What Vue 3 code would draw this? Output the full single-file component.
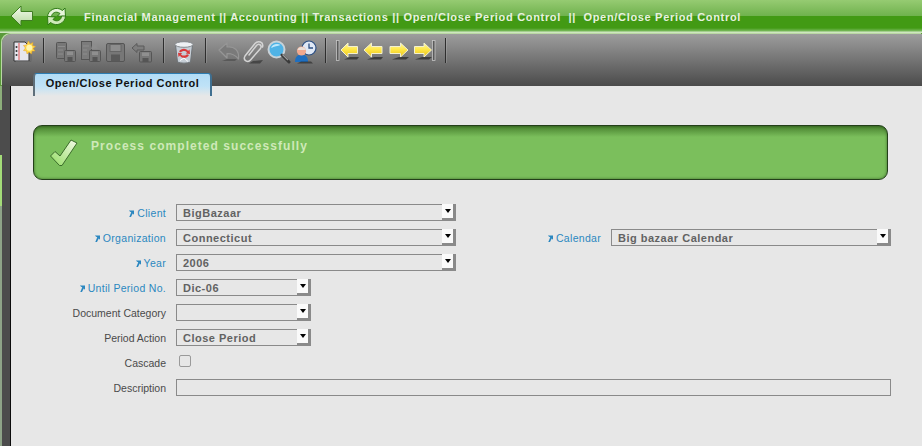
<script setup>
const breadcrumb = 'Financial Management || Accounting || Transactions || Open/Close Period Control  ||  Open/Close Period Control'
</script>

<template>
  <div class="page">
    <header class="topbar">
      <svg class="back" width="24" height="22" viewBox="0 0 24 22">
        <defs>
          <linearGradient id="backFill" x1="0" y1="0" x2="0" y2="1">
            <stop offset="0" stop-color="#f6fbf0" />
            <stop offset="1" stop-color="#b4d89c" />
          </linearGradient>
          <linearGradient id="arrowFill" x1="0" y1="0" x2="0" y2="1">
            <stop offset="0" stop-color="#fff9a0" />
            <stop offset="0.5" stop-color="#ffe642" />
            <stop offset="1" stop-color="#e8c020" />
          </linearGradient>
        </defs>
        <path d="M1 11 L11 1 L11 6.5 L22.5 6.5 L22.5 15.5 L11 15.5 L11 21 Z" fill="url(#backFill)" stroke="#3f7d22" stroke-width="1" stroke-linejoin="round" />
      </svg>
      <svg class="refresh" width="21" height="21" viewBox="0 0 21 21">
        <path d="M1.5 11 C1.5 4 10.5 -0.5 16.5 4.5 L19 2 L19.5 10.5 L11.5 10 L14 7.5 C10 4.5 5.5 7 5.5 11 Z" fill="#e6f5da" stroke="#2f7a15" stroke-width="1" stroke-linejoin="round" />
        <path d="M19.5 10 C19.5 17 10.5 21.5 4.5 16.5 L2 19 L1.5 10.5 L9.5 11 L7 13.5 C11 16.5 15.5 14 15.5 10 Z" fill="#cfeab8" stroke="#2f7a15" stroke-width="1" stroke-linejoin="round" />
      </svg>
      <span class="crumbs">{{ breadcrumb }}</span>
    </header>

    <div class="toolbar-wrap">
      <nav class="toolbar">
        <svg class="tool" width="24" height="24" viewBox="0 0 24 24">
          <path d="M2 2 H13 L17 6 V21 H2 Z" fill="#e6e6ee" stroke="#333" stroke-width="1" />
          <path d="M4 21.5 H19 V12" fill="none" stroke="#666" stroke-width="1" />
          <path d="M7 3 V20" stroke="#e05050" stroke-width="1" />
          <circle cx="4.5" cy="7" r="1" fill="#333" /><circle cx="4.5" cy="11" r="1" fill="#333" /><circle cx="4.5" cy="15" r="1" fill="#333" />
          <path d="M16.5 1 L18 4 L21 2.5 L20.5 5.5 L23.5 6.5 L21 8.5 L23 11 L20 11 L19.5 14 L17 12 L15 14 L14.5 11 L11.5 10.5 L13.5 8 L11.5 5.5 L14.5 5 Z" fill="#ffd84a" stroke="#e8a020" stroke-width="0.5" />
          <circle cx="17.3" cy="7.8" r="3" fill="#fff6b0" />
        </svg>
        <i class="sep first"></i>

        <svg class="tool" width="24" height="24" viewBox="0 0 24 24">
          <g fill="#777" stroke="#555" stroke-width="1">
            <rect x="2.5" y="2.5" width="10" height="16" rx="1" />
            <rect x="10.5" y="10.5" width="11" height="11" rx="1" />
          </g>
          <path d="M4 6.5 H11 M4 10 H9 M4 14 H9" stroke="#8d8d8d" />
          <rect x="13" y="11.5" width="6" height="3.5" fill="#8f8f8f" />
          <rect x="13.5" y="17" width="5" height="4" fill="#555" />
        </svg>
        <svg class="tool" width="24" height="24" viewBox="0 0 24 24">
          <rect x="3.5" y="1.5" width="10" height="18" fill="#7b7b7b" stroke="#555" />
          <path d="M5 6 H11 M5 10 H9 M5 14 H9" stroke="#8e8e8e" />
          <path d="M15 2 L16.5 5 L19.5 3.5 L18.5 7 L21 8.5 L13 9 Z" fill="#8d8d8d" />
          <rect x="11.5" y="10.5" width="11" height="11" rx="1" fill="#777" stroke="#555" />
          <rect x="14" y="11.5" width="6" height="3.5" fill="#8f8f8f" />
          <rect x="14.5" y="17" width="5" height="4" fill="#555" />
        </svg>
        <svg class="tool gap2" width="24" height="24" viewBox="0 0 24 24">
          <rect x="2.5" y="3.5" width="18" height="18" rx="1.5" fill="#777" stroke="#555" />
          <rect x="6" y="4.5" width="11" height="7" fill="#8d8d8d" stroke="#666" />
          <rect x="7" y="14.5" width="9" height="7" fill="#5a5a5a" />
        </svg>
        <svg class="tool gap2" width="24" height="24" viewBox="0 0 24 24">
          <path d="M2 8 L7 3.5 V6 H14 V10 H7 V12.5 Z" fill="#7e7e7e" stroke="#5a5a5a" />
          <rect x="9.5" y="11.5" width="12" height="10.5" rx="1" fill="#777" stroke="#555" />
          <rect x="12" y="12.5" width="7" height="3.5" fill="#8f8f8f" />
          <rect x="12.5" y="18" width="6" height="4" fill="#555" />
        </svg>
        <i class="sep second"></i>

        <svg class="tool" width="24" height="24" viewBox="0 0 24 24">
          <path d="M3.5 5 L5.5 22 C8 23.5 16 23.5 18.5 22 L20.5 5 Z" fill="#c6ced6" stroke="#6f7478" />
          <ellipse cx="12" cy="4.5" rx="9" ry="2.8" fill="#eef1f4" stroke="#858a8e" />
          <path d="M7 11.5 C9 7.5 15 8 16 11 L17.5 9.5 L18 14 L13.8 13.5 L15 12.3 C13.5 10.5 10 10.5 9 12.5 Z" fill="#d93a3a" />
          <path d="M17 15 C15 19 9 18.5 8 15.5 L6.5 17 L6 12.8 L10.2 13.2 L9 14.4 C10.5 16 14 16 15 14.2 Z" fill="#d93a3a" />
          <path d="M8 20.5 L12 18 L16 21.5" stroke="#fff" fill="none" />
        </svg>
        <i class="sep third"></i>

        <svg class="tool" width="24" height="24" viewBox="0 0 24 24">
          <path d="M2 10 L10 3 V7 C17 6 22.5 10 21.5 19 C18.5 15 15 13.5 10 13.5 V18 Z" fill="#7a7a7a" stroke="#969696" stroke-width="1.2" stroke-linejoin="round" />
          <path d="M5 21 H18 L20 19 H10 Z" fill="#333" opacity="0.4" />
        </svg>
        <svg class="tool gap-1" width="24" height="24" viewBox="0 0 24 24">
          <path d="M9 15 L16.5 5.5 C18.5 3 22.5 5 20.5 8.5 L10.5 20 C8 23 2.5 20.5 5 16 L15 3.5 C18 0 24 2 22.5 7" fill="none" stroke="#d4d4d4" stroke-width="1.5" stroke-linecap="round" />
          <path d="M9 23.5 H20 L23 20 L13 21 Z" fill="#2a2a2a" opacity="0.6" />
        </svg>
        <svg class="tool gap3" width="24" height="24" viewBox="0 0 24 24">
          <circle cx="9.5" cy="9.5" r="8" fill="#4fb3e6" stroke="#c8d2d8" stroke-width="2" />
          <path d="M4 8 C5 4.5 10 3 13.5 5 C11 6 7 6.5 4 8 Z" fill="#bfe8fb" />
          <path d="M15 15 L22 22" stroke="#3a3a3a" stroke-width="3" stroke-linecap="round" />
          <path d="M15.5 14.5 L21 20" stroke="#9a9a9a" stroke-width="1.2" />
        </svg>
        <svg class="tool gap2" width="24" height="24" viewBox="0 0 24 24">
          <circle cx="16" cy="8" r="7" fill="#dfe8f5" stroke="#2c4f82" stroke-width="1.2" />
          <path d="M16 3.5 V8 H20" fill="none" stroke="#2c4f82" stroke-width="1.3" />
          <path d="M2 22 C2 16 5.5 14.5 9 14.5 C12.5 14.5 15 16.5 15 22 Z" fill="#1f6fc0" />
          <circle cx="8.5" cy="11" r="4.6" fill="#f2a98e" />
          <path d="M4.5 10 C5 6 12 6 12.8 10 Z" fill="#eadfd8" />
          <path d="M4 23.5 H20 L18 21.5 H8 Z" fill="#222" opacity="0.6" />
        </svg>
        <i class="sep fourth"></i>

        <svg class="tool" width="24" height="24" viewBox="0 0 24 24">
          <rect x="0.5" y="0.5" width="2.5" height="20" fill="#5a5a5a" stroke="#c6c6c6" stroke-width="0.8" />
          <path d="M5 10 L12 3 V6.5 H21.5 V13.5 H12 V17 Z" fill="url(#arrowFill)" stroke="#f2f0d0" stroke-width="1" stroke-linejoin="round" />
          <path d="M8 19.5 H21 L23 17 H14 Z" fill="#1e1e1e" opacity="0.65" />
        </svg>
        <svg class="tool gap1" width="24" height="24" viewBox="0 0 24 24">
          <path d="M3 10 L10.5 3 V6.5 H21 V13.5 H10.5 V17 Z" fill="url(#arrowFill)" stroke="#f2f0d0" stroke-width="1" stroke-linejoin="round" />
          <path d="M6 19.5 H20 L22 17 H13 Z" fill="#1e1e1e" opacity="0.65" />
        </svg>
        <svg class="tool gap2" width="24" height="24" viewBox="0 0 24 24">
          <path d="M21 10 L13.5 3 V6.5 H3 V13.5 H13.5 V17 Z" fill="url(#arrowFill)" stroke="#f2f0d0" stroke-width="1" stroke-linejoin="round" />
          <path d="M5 19.5 H19 L22 17 H12 Z" fill="#1e1e1e" opacity="0.65" />
        </svg>
        <svg class="tool gap1" width="24" height="24" viewBox="0 0 24 24">
          <path d="M19.5 10 L12 3 V6.5 H2.5 V13.5 H12 V17 Z" fill="url(#arrowFill)" stroke="#f2f0d0" stroke-width="1" stroke-linejoin="round" />
          <rect x="20.5" y="0.5" width="2.5" height="20" fill="#5a5a5a" stroke="#c6c6c6" stroke-width="0.8" />
          <path d="M3 19.5 H17 L20 17 H10 Z" fill="#1e1e1e" opacity="0.65" />
        </svg>
        <i class="sep fifth"></i>
      </nav>
      <div class="tab">Open/Close Period Control</div>
    </div>

    <div class="body">
      <div class="rail"></div>
      <main class="content">
        <div class="message">
          <svg width="28" height="28" viewBox="0 0 28 28">
            <defs>
              <linearGradient id="checkFill" x1="1" y1="0" x2="0" y2="1">
                <stop offset="0" stop-color="#f4fbe8" />
                <stop offset="1" stop-color="#93dc62" />
              </linearGradient>
            </defs>
            <path d="M0.5 17 L5 12.5 L10 17 L21 1 L27 4 L12 26.5 L9.5 26.5 Z" fill="url(#checkFill)" stroke="#3a6b2a" stroke-width="1" stroke-linejoin="round" />
          </svg>
          <span class="message-text">Process completed successfully</span>
        </div>

        <form class="form">
          <label class="req"><svg class="mark" width="6" height="9" viewBox="0 0 7 9"><path d="M1 1 H7 V6 L5.5 4.5 L3.5 8.5 H1.5 L3.8 3 L2.5 2.5 Z" /></svg>Client</label>
          <div class="select wide"><span>BigBazaar</span><b class="arrow"></b></div>
          <span></span><span></span>

          <label class="req"><svg class="mark" width="6" height="9" viewBox="0 0 7 9"><path d="M1 1 H7 V6 L5.5 4.5 L3.5 8.5 H1.5 L3.8 3 L2.5 2.5 Z" /></svg>Organization</label>
          <div class="select wide"><span>Connecticut</span><b class="arrow"></b></div>
          <label class="req"><svg class="mark" width="6" height="9" viewBox="0 0 7 9"><path d="M1 1 H7 V6 L5.5 4.5 L3.5 8.5 H1.5 L3.8 3 L2.5 2.5 Z" /></svg>Calendar</label>
          <div class="select wide"><span>Big bazaar Calendar</span><b class="arrow"></b></div>

          <label class="req"><svg class="mark" width="6" height="9" viewBox="0 0 7 9"><path d="M1 1 H7 V6 L5.5 4.5 L3.5 8.5 H1.5 L3.8 3 L2.5 2.5 Z" /></svg>Year</label>
          <div class="select wide"><span>2006</span><b class="arrow"></b></div>
          <span></span><span></span>

          <label class="req"><svg class="mark" width="6" height="9" viewBox="0 0 7 9"><path d="M1 1 H7 V6 L5.5 4.5 L3.5 8.5 H1.5 L3.8 3 L2.5 2.5 Z" /></svg>Until Period No.</label>
          <div class="select small"><span>Dic-06</span><b class="arrow"></b></div>
          <span></span><span></span>

          <label>Document Category</label>
          <div class="select small"><span></span><b class="arrow"></b></div>
          <span></span><span></span>

          <label>Period Action</label>
          <div class="select small"><span>Close Period</span><b class="arrow"></b></div>
          <span></span><span></span>

          <label>Cascade</label>
          <div class="check"></div>
          <span></span><span></span>

          <label>Description</label>
          <div class="text-input"></div>
        </form>
      </main>
    </div>
  </div>
</template>

<style>
html,
body {
  margin: 0;
  background: #e7e7e7;
}
</style>

<style scoped>
.page {
  width: 922px;
  height: 446px;
  overflow: hidden;
  display: flex;
  flex-direction: column;
  font-family: 'Liberation Sans', Arial, sans-serif;
  background: #e7e7e7;
}
.topbar {
  height: 33px;
  box-sizing: border-box;
  display: flex;
  align-items: center;
  padding: 0 0 1px 10px;
  background: linear-gradient(
    #96cb72 0,
    #6fb24d 16px,
    #429a14 16px,
    #429a14 28px,
    #78b95c 31px,
    #cfe6c0 32px
  );
}
.refresh {
  margin-left: 12px;
}
.crumbs {
  margin: 1px 0 0 17px;
  white-space: pre;
  font-size: 11px;
  font-weight: 700;
  letter-spacing: 0.68px;
  color: #e8f1e0;
}
.toolbar-wrap {
  position: relative;
  height: 53px;
  background: #5a9a3a;
}
.toolbar {
  height: 52px;
  margin: 1px 0 0 2px;
  padding-left: 10px;
  box-sizing: border-box;
  display: flex;
  align-items: flex-start;
  border-top-left-radius: 9px;
  background: linear-gradient(#9d9d9d, #4b4b4b);
  box-shadow: -1px -1px 0 #b9d8a4;
}
.tool {
  flex: none;
  margin-top: 6px;
}
.gap-1 {
  margin-left: -1px;
}
.gap1 {
  margin-left: 1px;
}
.gap2 {
  margin-left: 2px;
}
.gap3 {
  margin-left: 3px;
}
.sep {
  flex: none;
  width: 1px;
  height: 25px;
  margin-top: 4px;
  background: #2e2e2e;
  box-shadow: 1px 0 0 rgba(255, 255, 255, 0.15);
}
.sep.first {
  margin: 4px 10px 0 7px;
}
.sep.second {
  margin: 4px 8px 0 9px;
}
.sep.third {
  margin: 4px 11px 0 9px;
}
.sep.fourth {
  margin: 4px 10px 0 8px;
}
.sep.fifth {
  margin: 4px 0 0 9px;
}
.tab {
  position: absolute;
  left: 33px;
  top: 40px;
  width: 179px;
  height: 23px;
  box-sizing: border-box;
  padding-top: 3px;
  text-align: center;
  font-size: 11px;
  font-weight: 700;
  letter-spacing: 0.52px;
  color: #111;
  border-top: 1px solid #2d7db2;
  border-left: 2px solid #5f6f7a;
  border-right: 2px solid #3f6f90;
  border-radius: 4px 4px 0 0;
  background: linear-gradient(#b2dcf6, #bfe2f7 55%, #e7e7e7);
}
.body {
  flex: 1;
  display: flex;
  min-height: 0;
}
.rail {
  flex: none;
  width: 10px;
  background: linear-gradient(
      #8cae7a 0,
      #8cae7a 24px,
      #4c4c4c 24px,
      #4c4c4c 69px,
      #a4dc78 69px,
      #a4dc78 120px,
      #8ea488 120px
    )
    0 0 / 2px 100% no-repeat,
    #4c4c4c;
  border-right: 1px solid #0c0c0c;
}
.content {
  flex: 1;
  padding: 39px 0 0;
}
.message {
  width: 855px;
  height: 55px;
  margin-left: 22px;
  box-sizing: border-box;
  display: flex;
  align-items: flex-start;
  padding: 13px 0 0 16px;
  gap: 13px;
  border: 1px solid #24401a;
  border-radius: 9px;
  background: linear-gradient(#47802e, #7bbf5c 11px, #7bbf5c);
  box-shadow: inset 0 0 3px rgba(20, 50, 10, 0.6);
}
.message-text {
  font-size: 12px;
  font-weight: 700;
  letter-spacing: 1.05px;
  color: #cfe9b9;
}
.form {
  display: grid;
  grid-template-columns: 155px 280px 135px 280px;
  grid-auto-rows: 17px;
  column-gap: 10px;
  row-gap: 8px;
  margin-top: 24px;
  font-size: 10.5px;
}
.form label {
  text-align: right;
  line-height: 19px;
  color: #4a4a4a;
  white-space: nowrap;
}
.form label.req {
  color: #2b87c0;
  letter-spacing: 0.3px;
}
.mark {
  margin-right: 3px;
  vertical-align: -1px;
  fill: #2b87c0;
}
.select {
  position: relative;
  height: 17px;
  box-sizing: border-box;
  padding-left: 6px;
  border: 1px solid #8a8a8a;
  line-height: 16px;
  font-size: 11px;
  font-weight: 700;
  letter-spacing: 0.5px;
  color: #626262;
}
.select.small {
  width: 135px;
}
.arrow {
  position: absolute;
  right: -1px;
  top: -1px;
  width: 14px;
  height: 17px;
  box-sizing: border-box;
  border-right: 3px solid #8a8a8a;
  border-bottom: 3px solid #8a8a8a;
  background: #fafafa;
}
.arrow::after {
  content: '';
  position: absolute;
  left: 3px;
  top: 5px;
  border: 3px solid transparent;
  border-top: 4px solid #000;
  border-bottom: 0;
}
.check {
  width: 12px;
  height: 12px;
  margin: 1px 0 0 3px;
  box-sizing: border-box;
  border: 1px solid #9a9a9a;
  border-radius: 2px;
  background: #e7e7e7;
}
.text-input {
  grid-column: 2 / 5;
  height: 17px;
  box-sizing: border-box;
  border: 1px solid #8a8a8a;
}
</style>
